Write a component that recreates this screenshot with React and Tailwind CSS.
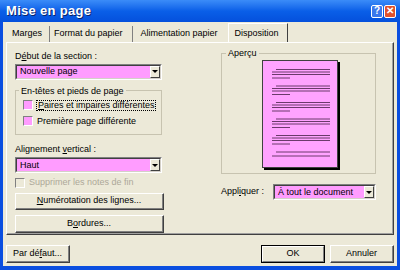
import React from "react";

const font = { fontFamily: '"Liberation Sans", Arial, sans-serif' };

function U({ children }) {
  return <span className="underline underline-offset-[1px]">{children}</span>;
}

function Combo({ children, className = "" }) {
  return (
    <div
      className={`flex h-[16px] border border-t-[#808080] border-l-[#808080] border-b-white border-r-white ${className}`}
    >
      <div className="flex flex-1 items-center border border-t-[#404040] border-l-[#404040] border-b-[#d4d0c8] border-r-[#d4d0c8] bg-[#ff9cff]">
        <span className="flex-1 pl-[3px] leading-none">{children}</span>
        <div className="flex h-full w-[10px] items-center justify-center border border-t-white border-l-white border-b-[#404040] border-r-[#404040] bg-[#ece9d8]">
          <div className="h-0 w-0 border-x-[3px] border-t-[3px] border-x-transparent border-t-black" />
        </div>
      </div>
    </div>
  );
}

function Button({ children, className = "", isDefault = false }) {
  return (
    <div
      className={`flex items-center justify-center border ${
        isDefault
          ? "border-black"
          : "border-t-white border-l-white border-b-[#404040] border-r-[#404040]"
      } ${className}`}
    >
      <div
        className={`flex h-full w-full items-center justify-center ${
          isDefault
            ? "border border-t-white border-l-white border-b-[#808080] border-r-[#808080]"
            : "border-b border-r border-b-[#808080] border-r-[#808080]"
        } bg-[#ece9d8]`}
      >
        {children}
      </div>
    </div>
  );
}

function Check({ disabled = false }) {
  return (
    <div
      className={`h-[10px] w-[10px] shrink-0 border border-t-[#808080] border-l-[#808080] border-b-white border-r-white ${
        disabled ? "bg-[#ece9d8]" : "bg-[#ff9cff]"
      }`}
    />
  );
}

function PagePreview() {
  const groups = [0, 1, 2, 3, 4];
  return (
    <div className="relative h-[108px] w-[76px]">
      <div className="absolute left-[2px] top-[2px] h-[108px] w-[76px] bg-black" />
      <div className="relative h-[108px] w-[76px] border border-[#404040] bg-[#ffa3ff]">
        <svg width="74" height="106" viewBox="0 0 74 106">
          {groups.map(g => {
            const y = 8.5 + g * 16.5;
            return (
              <g key={g} stroke="#6b3a6b" strokeWidth="1">
                <line x1="13" y1={y} x2="67" y2={y} />
                <line x1="9" y1={y + 2.5} x2="67" y2={y + 2.5} />
                <line x1="9" y1={y + 5} x2="67" y2={y + 5} />
                <line x1="9" y1={y + 8.5} x2="27" y2={y + 8.5} />
              </g>
            );
          })}
          <g stroke="#6b3a6b" strokeWidth="1">
            <line x1="13" y1="91" x2="67" y2="91" />
            <line x1="9" y1="95" x2="67" y2="95" />
          </g>
        </svg>
      </div>
    </div>
  );
}

export default function App() {
  return (
    <div
      className="h-[270px] w-[400px] overflow-hidden whitespace-nowrap bg-[#0a4ee0] text-[9px] text-black"
      style={font}
    >
      <div className="flex h-[22px] items-center bg-gradient-to-b from-[#3b8cf8] via-[#0a5fe8] to-[#0550dc] pl-[6px] pr-[4px]">
        <span className="flex-1 text-[13px] font-bold tracking-[0.3px] text-white [text-shadow:1px_1px_0_#0a246a]">
          Mise en page
        </span>
        <div className="flex gap-[1px]">
          <div className="flex h-[13px] w-[12px] items-center justify-center rounded-[2px] border border-white bg-[#3a78ec] text-[10px] font-bold leading-none text-white">
            ?
          </div>
          <div className="flex h-[13px] w-[12px] items-center justify-center rounded-[2px] border border-white bg-[#e0512c] text-[10px] font-bold leading-none text-white">
            ✕
          </div>
        </div>
      </div>

      <div className="mx-[3px] flex h-[244px] flex-col bg-[#ece9d8] px-[3px]">
        <div className="mt-[1px] flex h-[19px] items-end pl-[2px]">
          <div className="flex h-[16px] items-center border-r border-r-[#808080] pl-[4px] pr-[7px]">Marges</div>
          <div className="flex h-[16px] items-center border-r border-r-[#808080] pl-[4px] pr-[9px]">
            Format du papier
          </div>
          <div className="flex h-[16px] items-center pl-[8px] pr-[10px]">Alimentation papier</div>
          <div className="-mb-[1px] flex h-[20px] items-center border border-b-0 border-t-white border-l-white border-r-[#404040] bg-[#ece9d8] pl-[6px] pr-[8px]">
            Disposition
          </div>
        </div>

        <div className="flex h-[193px] border border-t-white border-l-white border-b-[#404040] border-r-[#404040]">
          <div className="flex flex-1 border-b border-r border-b-[#a0a0a0] border-r-[#a0a0a0] pl-[8px]">
            <div className="flex w-[149px] flex-col">
              <div className="mt-[7px] h-[12px] leading-[12px]">
                D<U>é</U>but de la section :
              </div>
              <Combo className="mt-[2px] w-[147px]">Nouvelle page</Combo>

              <fieldset className="mt-[5px] h-[51px] w-[147px] min-w-0 border border-[#c7c3b0] px-[7px]">
                <legend className="-ml-[4px] px-[2px] leading-[12px]">En-têtes et pieds de page</legend>
                <div className="mt-[3px] flex h-[11px] items-center">
                  <Check />
                  <span className="ml-[3px] border border-dotted border-black px-[1px] leading-[9px]">
                    <U>P</U>aires et impaires différentes
                  </span>
                </div>
                <div className="mt-[5px] flex h-[11px] items-center">
                  <Check />
                  <span className="ml-[4px]">
                    Première pa<U>g</U>e différente
                  </span>
                </div>
              </fieldset>

              <div className="mt-[8px] h-[12px] leading-[12px]">
                Alignement <U>v</U>ertical :
              </div>
              <Combo className="mt-[2px] w-[147px]">Haut</Combo>

              <div className="mt-[4px] flex h-[11px] items-center text-[#aca899]">
                <Check disabled />
                <span className="ml-[4px]">Supprimer les notes de fin</span>
              </div>

              <Button className="mt-[5px] h-[17px] w-[149px]">
                <span>
                  <U>N</U>umérotation des lignes...
                </span>
              </Button>
              <Button className="mt-[5px] h-[18px] w-[149px]">
                <span>
                  B<U>o</U>rdures...
                </span>
              </Button>
            </div>

            <div className="ml-[57px] flex w-[155px] flex-col">
              <fieldset className="mt-[4px] flex h-[127px] w-[155px] min-w-0 justify-center border border-[#c7c3b0] pl-[2px]">
                <legend className="ml-[2px] px-[2px] leading-[12px]">Aperçu</legend>
                <div className="mt-[1px]">
                  <PagePreview />
                </div>
              </fieldset>
              <div className="mt-[10px] flex items-center">
                <span className="w-[52px]">
                  Appl<U>i</U>quer :
                </span>
                <Combo className="w-[103px]">À tout le document</Combo>
              </div>
            </div>
          </div>
        </div>

        <div className="mt-[10px] flex h-[18px]">
          <Button className="w-[64px]">
            <span>
              Par dé<U>f</U>aut...
            </span>
          </Button>
          <div className="flex-1" />
          <Button isDefault className="w-[64px]">
            OK
          </Button>
          <Button className="ml-[5px] w-[64px]">Annuler</Button>
        </div>
      </div>
    </div>
  );
}
